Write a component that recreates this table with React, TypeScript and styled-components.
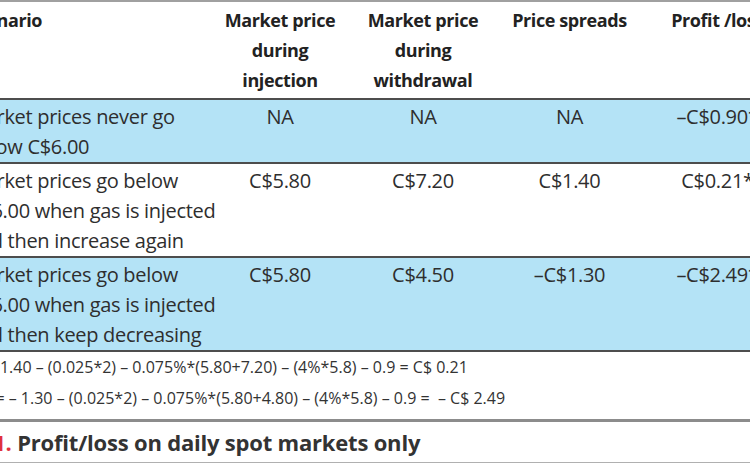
import styled, { createGlobalStyle } from "styled-components";

const Global = createGlobalStyle`
  html, body {
    margin: 0;
    padding: 0;
    background: #ffffff;
  }
  body {
    overflow: hidden;
  }
`;

const Frame = styled.div`
  width: 750px;
  height: 463px;
  overflow: hidden;
  font-family: "Open Sans", "Noto Sans", sans-serif;
  color: #2b2b2b;
`;

// the picture is a crop, so the sheet starts left of the frame
const Sheet = styled.div`
  margin-left: -34px;
  width: 824px;
`;

const Table = styled.table`
  width: 824px;
  border-collapse: collapse;
  table-layout: fixed;
`;

const HeadCell = styled.th<{ $left?: boolean }>`
  font-weight: 700;
  font-size: 18px;
  letter-spacing: -0.4px;
  line-height: 30px;
  color: #222;
  vertical-align: top;
  white-space: nowrap;
  text-align: ${(p) => (p.$left ? "left" : "center")};
  padding: 3px 0 3px ${(p) => (p.$left ? "2px" : "0")};
  border-top: 2px solid #a0a0a0;
  border-bottom: 2px solid #4d4d4d;
`;

const Row = styled.tr<{ $shade?: boolean }>`
  background: ${(p) => (p.$shade ? "#b4e3f6" : "#ffffff")};
`;

const Cell = styled.td<{ $left?: boolean }>`
  font-size: 20px;
  letter-spacing: -0.3px;
  line-height: 30px;
  color: #2e2e2e;
  vertical-align: top;
  white-space: nowrap;
  text-align: ${(p) => (p.$left ? "left" : "center")};
  padding: 2px 0 0 ${(p) => (p.$left ? "2px" : "0")};
  border-bottom: 2px solid #4d4d4d;
`;

const Notes = styled.div`
  padding: 0 0 5px 0;
  text-indent: -2px;
  border-bottom: 3px solid #8c8c8c;
`;

const NoteLine = styled.div`
  font-size: 16px;
  line-height: 31px;
  color: #333;
  white-space: nowrap;
`;

const Caption = styled.div`
  font-size: 22px;
  font-weight: 700;
  letter-spacing: -0.2px;
  line-height: 40px;
  height: 40px;
  color: #333;
  text-indent: -37px;
  white-space: nowrap;
  border-bottom: 3px solid #b0b0b0;
`;

const Label = styled.span`
  color: #e0303c;
`;

const rows = [
  {
    scenario: ["Market prices never go", "below C$6.00"],
    values: ["NA", "NA", "NA", "–C$0.90*"],
    shade: true,
  },
  {
    scenario: ["Market prices go below", "C$6.00 when gas is injected", "and then increase again"],
    values: ["C$5.80", "C$7.20", "C$1.40", "C$0.21*"],
    shade: false,
  },
  {
    scenario: ["Market prices go below", "C$6.00 when gas is injected", "and then keep decreasing"],
    values: ["C$5.80", "C$4.50", "–C$1.30", "–C$2.49*"],
    shade: true,
  },
];

const widths = [242, 144, 142, 151, 145];

function Lines({ items }: { items: string[] }) {
  return (
    <>
      {items.map((t, i) => (
        <span key={i}>
          {i > 0 && <br />}
          {t}
        </span>
      ))}
    </>
  );
}

function App() {
  return (
    <Frame>
      <Global />
      <Sheet>
        <Table>
          <colgroup>
            {widths.map((w, i) => (
              <col key={i} style={{ width: w }} />
            ))}
          </colgroup>
          <thead>
            <tr>
              <HeadCell $left>Scenario</HeadCell>
              <HeadCell>
                <Lines items={["Market price", "during", "injection"]} />
              </HeadCell>
              <HeadCell>
                <Lines items={["Market price", "during", "withdrawal"]} />
              </HeadCell>
              <HeadCell>Price spreads</HeadCell>
              <HeadCell>Profit /loss</HeadCell>
            </tr>
          </thead>
          <tbody>
            {rows.map((r, i) => (
              <Row key={i} $shade={r.shade}>
                <Cell $left>
                  <Lines items={r.scenario} />
                </Cell>
                {r.values.map((v, j) => (
                  <Cell key={j}>{v}</Cell>
                ))}
              </Row>
            ))}
          </tbody>
        </Table>
        <Notes>
          <NoteLine>*P = 1.40 – (0.025*2) – 0.075%*(5.80+7.20) – (4%*5.8) – 0.9 = C$ 0.21</NoteLine>
          <NoteLine>**P = – 1.30 – (0.025*2) – 0.075%*(5.80+4.80) – (4%*5.8) – 0.9 = &nbsp;– C$ 2.49</NoteLine>
        </Notes>
        <Caption>
          <Label>Table 1.</Label> Profit/loss on daily spot markets only
        </Caption>
      </Sheet>
    </Frame>
  );
}

export default App;
